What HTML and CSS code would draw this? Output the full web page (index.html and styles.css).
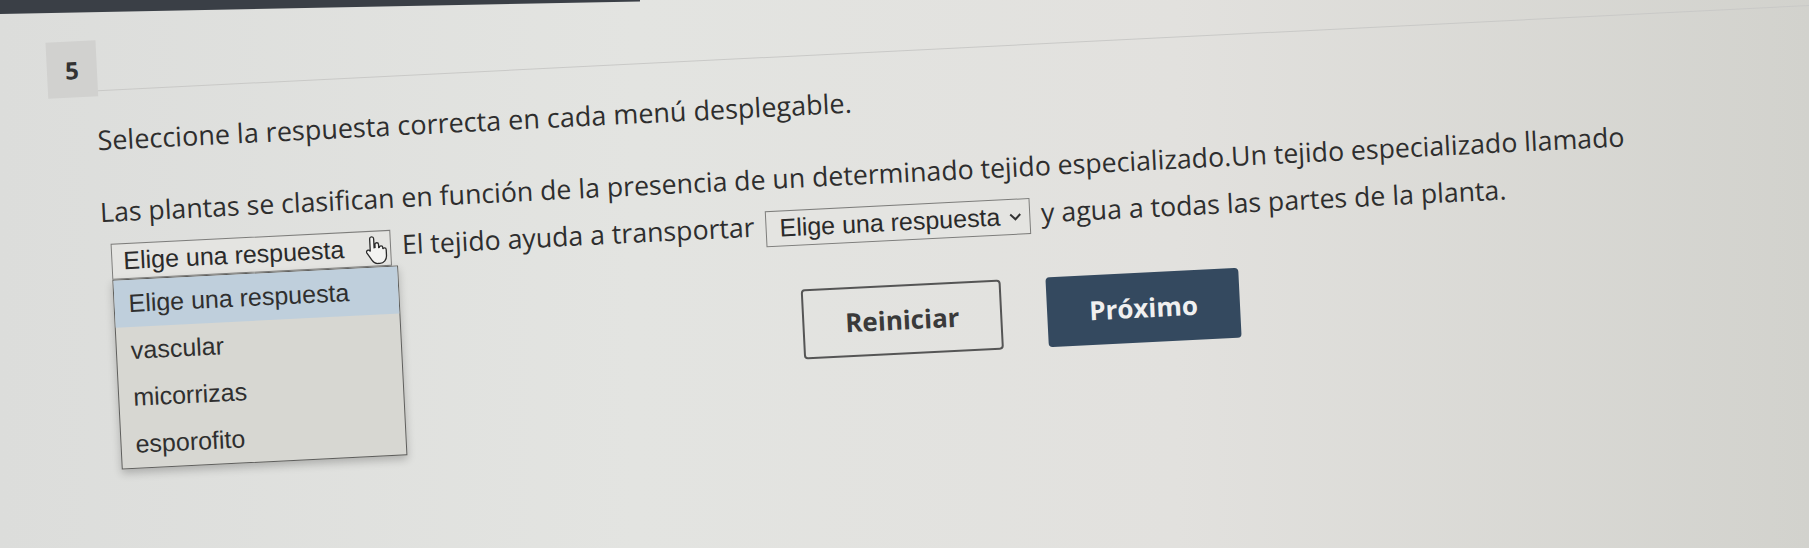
FILE: index.html
```html
<!DOCTYPE html>
<html lang="es">
<head>
  <meta charset="UTF-8">
  <title>Pregunta 5</title>
  <link rel="stylesheet" href="styles.css">
</head>
<body>
  <div class="topbar"></div>

  <!-- La foto de la pantalla está algo inclinada: el bloque entero se gira un poco -->
  <div class="question">
    <div class="q-head">
      <div class="q-num">5</div>
      <div class="q-rule"></div>
    </div>

    <p class="prompt">Seleccione la respuesta correcta en cada menú desplegable.</p>

    <p class="stem">
      Las plantas se clasifican en función de la presencia de un determinado tejido especializado.Un tejido especializado llamado
      <span class="dd is-open">
        <span class="dd-label">Elige una respuesta</span>
        <svg class="cursor" width="24" height="30" viewBox="0 0 24 30">
          <path d="M7 2c1.2 0 2 .8 2 2v9l1-.2V10c0-1.1.8-1.8 1.8-1.8s1.8.7 1.8 1.8v3l.6-.1c.3-.9 1-1.3 1.8-1.3 1 0 1.7.8 1.7 1.8v1.4c.3-.7.9-1.1 1.6-1.1 1 0 1.7.8 1.7 1.8v6c0 4-2.8 7.5-7 7.5h-2c-2.6 0-4.3-1.4-5.6-3.4L1.6 18c-.6-1-.3-2.1.6-2.6.9-.5 1.9-.2 2.5.6L5 16.6V4c0-1.2.8-2 2-2z" fill="#f4f4f2" stroke="#2a2a2a" stroke-width="1.3"/>
        </svg>
        <span class="dd-list">
          <span class="dd-option is-active">Elige una respuesta</span>
          <span class="dd-option">vascular</span>
          <span class="dd-option">micorrizas</span>
          <span class="dd-option">esporofito</span>
        </span>
      </span>
      El tejido ayuda a transportar
      <span class="dd">
        <span class="dd-label">Elige una respuesta</span>
        <svg class="dd-caret" width="14" height="10" viewBox="0 0 14 10"><path d="M2 2.5l5 5 5-5" fill="none" stroke="#333" stroke-width="2"/></svg>
      </span>
      y agua a todas las partes de la planta.
    </p>

    <div class="actions">
      <button class="btn btn-outline">Reiniciar</button>
      <button class="btn btn-primary">Próximo</button>
    </div>
  </div>
</body>
</html>
```

FILE: styles.css
```css
/* Reset */
* {
  margin: 0;
  padding: 0;
  box-sizing: border-box;
}
body {
  font-family: "Open Sans", "Noto Sans", sans-serif;
  color: #2e2e2e;
  background: linear-gradient(90deg, #dcdddb 0%, #e3e4e1 35%, #e2e1de 65%, #d2d2cd 100%);
  height: 548px;
  overflow: hidden;
}
.topbar {
  width: 640px;
  height: 14px;
  background: #3a3f46;
  clip-path: polygon(0 0, 100% 0, 100% 10%, 0 100%);
}
.question {
  padding-top: 31px;
  transform: rotate(-2.85deg);
  transform-origin: 0 0;
}
.q-head {
  display: flex;
  align-items: flex-end;
  padding-left: 44px;
}
.q-num {
  width: 50px;
  height: 56px;
  background: #d1d1cf;
  display: flex;
  align-items: center;
  justify-content: center;
  font-weight: 700;
  font-size: 24px;
  color: #333;
}
.q-rule {
  flex: 1;
  height: 1px;
  background: #c9c9c7;
  margin-bottom: 5px;
}
.prompt {
  padding-left: 91px;
  margin-top: 26px;
  font-size: 27px;
  line-height: 36px;
}
.stem {
  width: 1750px;
  padding-left: 90px;
  margin-top: 30px;
  font-size: 26.7px;
  line-height: 47px;
}
.dd {
  position: relative;
  display: inline-flex;
  align-items: center;
  justify-content: space-between;
  gap: 4px;
  width: 265px;
  height: 36px;
  margin: 0 4px;
  padding: 0 7px 0 13px;
  border: 1px solid #7d7d7b;
  background: #e4e4e1;
  font-family: "Liberation Sans", Arial, sans-serif;
  font-size: 25px;
  line-height: 1;
  color: #2a2a2a;
  vertical-align: middle;
}
.dd.is-open {
  margin-left: 9px;
  width: 280px;
  padding-left: 11px;
}
.dd-caret {
  flex-shrink: 0;
}
.cursor {
  position: absolute;
  right: 1px;
  top: 3px;
}
.dd-list {
  position: absolute;
  left: -1px;
  top: 35px;
  width: 286px;
  background: #d7d7d2;
  border: 1px solid #5e5e5c;
  box-shadow: 0 4px 8px rgba(0,0,0,0.22);
  display: flex;
  flex-direction: column;
}
.dd-option {
  height: 47px;
  display: flex;
  align-items: center;
  padding-left: 14px;
  font-size: 25px;
  color: #2f2f2f;
}
.dd-option.is-active {
  background: #bfcfdc;
}
.actions {
  display: flex;
  gap: 45px;
  padding-left: 786px;
  margin-top: 42px;
}
.btn {
  height: 70px;
  border-radius: 4px;
  font-family: "Open Sans", "Noto Sans", sans-serif;
  font-weight: 700;
  font-size: 26px;
  cursor: pointer;
}
.btn-outline {
  width: 200px;
  background: transparent;
  border: 2px solid #555;
  color: #3a3a3a;
}
.btn-primary {
  width: 193px;
  background: #34495f;
  border: none;
  color: #f0f0f0;
}
```
